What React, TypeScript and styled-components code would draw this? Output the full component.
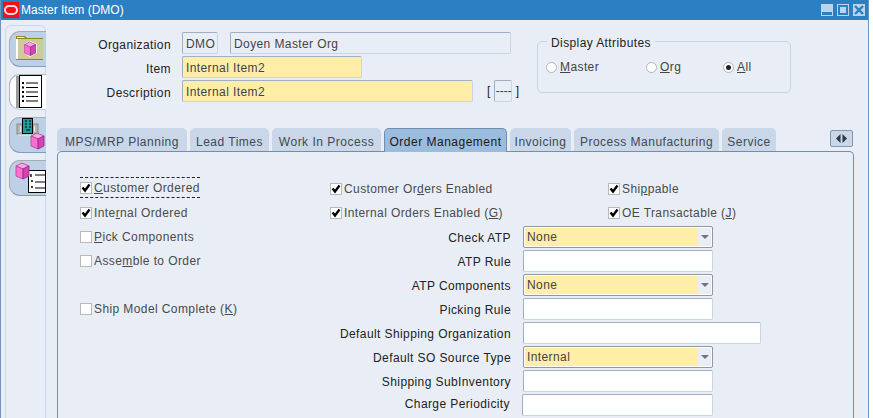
import * as React from 'react';
import styled, { createGlobalStyle } from 'styled-components';

const GlobalStyle = createGlobalStyle`
  html, body {
    margin: 0;
    padding: 0;
    height: 100%;
    background: #ffffff;
    overflow: hidden;
  }
  body {
    font-family: "Liberation Sans", Arial, sans-serif;
    font-size: 12px;
    letter-spacing: 0.4px;
  }
  u {
    text-underline-offset: 1px;
  }
`;

const Window = styled.div`
  display: flex;
  flex-direction: column;
  width: 869px;
  height: 418px;
  box-sizing: border-box;
  border-left: 1px solid #6f93bd;
  border-right: 1px solid #6f93bd;
  background: #e9eef6;
  overflow: hidden;
`;

const TitleBar = styled.div`
  display: flex;
  align-items: center;
  flex: none;
  height: 20px;
  margin-left: -1px;
  margin-right: -1px;
  padding-left: 3px;
  padding-right: 4px;
  background: #2b80c3;
  color: #ffffff;
  letter-spacing: 0;
`;

const Logo = styled.div`
  display: flex;
  align-items: center;
  justify-content: center;
  width: 16px;
  height: 16px;
  margin-right: 2px;
  background: #f40f14;
`;

const LogoRing = styled.div`
  width: 10px;
  height: 6px;
  border: 2px solid #ffd9d9;
  border-radius: 5px;
`;

const TitleText = styled.div`
  flex: 1;
`;

const WindowButtons = styled.div`
  display: flex;
  gap: 4px;
`;

const WindowButton = styled.svg`
  display: block;
  width: 12px;
  height: 12px;
  background: #b9d4eb;
`;

const Body = styled.div`
  display: flex;
  flex: 1;
  min-height: 0;
`;

const SideStrip = styled.div`
  display: flex;
  flex-direction: column;
  flex: none;
  gap: 7px;
  width: 41px;
  margin-top: 5px;
  margin-left: 4px;
  padding-top: 5px;
  padding-left: 3px;
  box-sizing: border-box;
  border: 1px solid #c9d8ea;
  border-bottom: none;
  border-top-left-radius: 6px;
  border-top-right-radius: 6px;
`;

const SideTab = styled.div<{ $active?: boolean }>`
  flex: none;
  width: 37px;
  height: 36px;
  margin-right: -1px;
  box-sizing: border-box;
  border: 1px solid ${(p) => (p.$active ? '#aeb4bc' : '#a4acb6')};
  border-right: none;
  border-bottom-color: ${(p) => (p.$active ? '#c2cedd' : '#7f9dc0')};
  border-radius: 11px 0 0 11px;
  background: ${(p) => (p.$active ? '#ffffff' : '#bed0e6')};
  overflow: hidden;
`;

const TabIcon = styled.svg`
  display: block;
  width: 36px;
  height: 34px;
`;

const Main = styled.div`
  display: flex;
  flex-direction: column;
  flex: 1;
  min-width: 0;
`;

const Header = styled.div`
  display: flex;
  flex: none;
  height: 83px;
  padding-top: 12px;
  box-sizing: border-box;
`;

const HeaderForm = styled.div`
  display: grid;
  flex: none;
  grid-template-columns: 125px 1fr;
  grid-auto-rows: 24px;
  column-gap: 11px;
  width: 491px;
`;

const Prompt = styled.div`
  align-self: center;
  padding-top: 2px;
  color: #222222;
  text-align: right;
  white-space: nowrap;
`;

const FieldRow = styled.div`
  display: flex;
  align-items: flex-start;
  gap: 12px;
`;

const Field = styled.div<{ $w?: number; $tone?: 'white' | 'yellow' | 'plain' }>`
  flex: none;
  width: ${(p) => (p.$w ? `${p.$w}px` : 'auto')};
  height: 22px;
  padding-left: 3px;
  box-sizing: border-box;
  border: 1px solid #c5d6e9;
  border-top-color: #9fb0c4;
  border-left-color: #9fb0c4;
  border-radius: 2px;
  background: ${(p) =>
    p.$tone === 'yellow' ? '#ffeea8' : p.$tone === 'plain' ? '#e9eef6' : '#ffffff'};
  color: #444444;
  line-height: 23px;
  white-space: nowrap;
`;

const DashField = styled(Field)`
  padding-left: 1px;
  letter-spacing: 0;
  line-height: 21px;
`;

const Bracket = styled.span`
  flex: none;
  margin: 0 -9px 0 2px;
  color: #222222;
  line-height: 22px;
`;

const BracketEnd = styled(Bracket)`
  margin: 0 0 0 -8px;
`;

const AttrGroup = styled.div`
  position: relative;
  flex: none;
  display: flex;
  align-items: flex-start;
  width: 254px;
  height: 52px;
  margin-top: 9px;
  padding: 18px 0 0 8px;
  box-sizing: border-box;
  border: 1px solid #c5d6e9;
  border-radius: 5px;
`;

const GroupLegend = styled.div`
  position: absolute;
  top: -6px;
  left: 9px;
  padding: 0 4px;
  background: #e9eef6;
  color: #222222;
  line-height: 14px;
`;

const RadioItem = styled.label<{ $w: number }>`
  display: flex;
  align-items: center;
  flex: none;
  gap: 3px;
  width: ${(p) => p.$w}px;
  height: 14px;
  color: #444444;
`;

const RadioDot = styled.span<{ $on?: boolean }>`
  display: flex;
  align-items: center;
  justify-content: center;
  flex: none;
  width: 11px;
  height: 11px;
  box-sizing: border-box;
  border: 1px solid #b4b4b4;
  border-radius: 50%;
  background: #ffffff;

  &::after {
    content: '';
    display: ${(p) => (p.$on ? 'block' : 'none')};
    width: 5px;
    height: 5px;
    border-radius: 50%;
    background: #222222;
  }
`;

const TabRow = styled.div`
  display: flex;
  align-items: flex-start;
  flex: none;
  gap: 3px;
  height: 23px;
  margin-top: 25px;
  margin-left: 11px;
  width: 796px;
`;

const Tab = styled.div<{ $w: number; $active?: boolean }>`
  position: relative;
  z-index: 1;
  flex: none;
  width: ${(p) => p.$w}px;
  height: ${(p) => (p.$active ? 24 : 23)}px;
  box-sizing: border-box;
  border-radius: 5px 5px 0 0;
  border: 1px solid ${(p) => (p.$active ? '#6f8fb0' : '#c9d7e8')};
  border-bottom: none;
  background: ${(p) => (p.$active ? '#9bbcdc' : '#c9d7e8')};
  color: ${(p) => (p.$active ? '#1a1a1a' : '#3d4a56')};
  letter-spacing: 0.5px;
  text-align: center;
  line-height: 26px;
  white-space: nowrap;
`;

const ScrollButton = styled.div`
  display: flex;
  align-items: center;
  justify-content: center;
  flex: none;
  width: 23px;
  height: 17px;
  margin-left: auto;
  margin-top: 2px;
  box-sizing: border-box;
  border: 1px solid #7f97b3;
  border-radius: 2px;
  background: #c9d7e8;
`;

const ScrollGlyph = styled.svg`
  display: block;
  width: 11px;
  height: 9px;
`;

const Panel = styled.div`
  flex: 1;
  width: 797px;
  margin-left: 11px;
  padding: 25px 0 0 22px;
  box-sizing: border-box;
  border: 1px solid #6f8fb0;
  border-bottom: none;
  border-radius: 5px 5px 0 0;
`;

const PanelGrid = styled.div`
  display: grid;
  grid-template-columns: 250px 181px 12px 85px 105px 48px;
  grid-auto-rows: 24px;
`;

const CheckItem = styled.label<{ $col: string; $row: number; $focus?: boolean }>`
  display: flex;
  align-items: center;
  align-self: center;
  justify-self: start;
  gap: 2px;
  grid-column: ${(p) => p.$col};
  grid-row: ${(p) => p.$row};
  height: ${(p) => (p.$focus ? '21px' : 'auto')};
  margin-top: ${(p) => (p.$focus ? '-3px' : '0')};
  border-top: ${(p) => (p.$focus ? '1px dashed #222222' : 'none')};
  border-bottom: ${(p) => (p.$focus ? '1px dashed #222222' : 'none')};
  box-sizing: border-box;
  color: #4a4a4a;
  white-space: nowrap;
`;

const CheckBox = styled.span`
  display: block;
  flex: none;
  width: 12px;
  height: 12px;
  box-sizing: border-box;
  border: 1px solid #b9b9b9;
  background: #ffffff;
`;

const CheckMark = styled.svg`
  display: block;
  width: 10px;
  height: 10px;
`;

const GridPrompt = styled(Prompt)<{ $row: number; $last?: boolean }>`
  grid-column: 2;
  grid-row: ${(p) => p.$row};
  margin-right: ${(p) => (p.$last ? 1 : 0)}px;
  padding-top: ${(p) => (p.$last ? 0 : 2)}px;
  margin-bottom: ${(p) => (p.$last ? 2 : 0)}px;
`;

const GridField = styled(Field)<{ $row: number; $wide?: boolean; $nudge?: boolean }>`
  grid-column: 4 / span ${(p) => (p.$wide ? 3 : 2)};
  grid-row: ${(p) => p.$row};
  align-self: center;
  margin-left: ${(p) => (p.$nudge ? -1 : 0)}px;
`;

const Combo = styled.div<{ $row: number }>`
  display: flex;
  grid-column: 4 / span 2;
  grid-row: ${(p) => p.$row};
  align-self: center;
  height: 22px;
  box-sizing: border-box;
  border: 1px solid #8f98a3;
  border-radius: 2px;
  background: #e9eef6;
  box-shadow: inset 0 0 0 1px #ffffff;
`;

const ComboValue = styled.div`
  flex: 1;
  margin: 1px 0 1px 1px;
  padding-left: 2px;
  background: #ffeea8;
  color: #444444;
  line-height: 19px;
`;

const ComboArrow = styled.div`
  display: flex;
  align-items: center;
  justify-content: center;
  flex: none;
  width: 14px;

  &::after {
    content: '';
    border-top: 4px solid #6c7486;
    border-left: 4px solid transparent;
    border-right: 4px solid transparent;
  }
`;

const Cube = ({ x, y, s = 1 }: { x: number; y: number; s?: number }) => (
  <g transform={`translate(${x} ${y}) scale(${s})`}>
    <path d="M0 3 L6 0 L13 3 L7 6 Z" fill="#ffa6dd" stroke="#b13fa0" strokeWidth="0.8" />
    <path d="M0 3 L7 6 L7 16 L0 13 Z" fill="#ff6fce" stroke="#b13fa0" strokeWidth="0.8" />
    <path d="M13 3 L7 6 L7 16 L13 13 Z" fill="#d445b4" stroke="#8a2a86" strokeWidth="0.8" />
  </g>
);

const FolderIcon = () => (
  <TabIcon viewBox="0 0 36 34">
    <path d="M6 6 V4 H15 L17 6 H33 V7 H6 Z" fill="#8b8b1c" />
    <path d="M7 5 H14 L15 6 H7 Z" fill="#f3f0c4" />
    <rect x="6" y="7" width="27" height="20" fill="#cfcb97" />
    <rect x="6" y="7" width="2" height="20" fill="#ffffff" />
    <rect x="6" y="27" width="27" height="1" fill="#8b8b1c" />
    <path d="M14 12 L20 9 L27 12 V21 L20 25 L14 21 Z" fill="#ffffff" />
    <Cube x={14.5} y={10} s={0.85} />
  </TabIcon>
);

const ListIcon = () => (
  <TabIcon viewBox="0 0 36 34">
    <rect x="6" y="1" width="3" height="32" fill="#9b9b9b" />
    <rect x="9.5" y="0.5" width="22" height="32" fill="#ffffff" stroke="#000000" />
    {[8, 12.5, 17, 21.5, 26].map((y) => (
      <React.Fragment key={y}>
        <rect x="12" y={y - 1} width="2" height="2" fill="#000000" />
        <rect x="16" y={y - 0.5} width="12" height="1" fill="#000000" />
      </React.Fragment>
    ))}
  </TabIcon>
);

const BuildingIcon = () => (
  <TabIcon viewBox="0 0 36 34">
    <rect x="7" y="6" width="21" height="10" fill="#b4b4b4" stroke="#8a8a8a" />
    <path d="M8 17 H29" stroke="#e8e8e8" strokeWidth="1" />
    <rect x="10" y="8" width="1" height="6" fill="#e8e8e8" />
    <rect x="24" y="8" width="1" height="6" fill="#e8e8e8" />
    <rect x="12.5" y="0.5" width="10" height="15" fill="#1f9e9e" stroke="#000000" />
    {[3, 6, 9].map((y) => (
      <path key={y} d={`M15 ${y} H17 M19 ${y} H21`} stroke="#000000" strokeWidth="1" />
    ))}
    <path d="M16 12 H20" stroke="#000000" strokeWidth="1" />
    <Cube x={21} y={15} />
  </TabIcon>
);

const OrderIcon = () => (
  <TabIcon viewBox="0 0 36 34">
    <rect x="18.5" y="9.5" width="17" height="22" fill="#ffffff" stroke="#000000" />
    <path d="M21 13 V16 M21 20 H23 M21 26 H23" stroke="#000000" strokeWidth="1.4" />
    {[14, 21, 27].map((y) => (
      <path key={y} d={`M25 ${y} H35`} stroke="#000000" strokeWidth="1" />
    ))}
    <Cube x={6} y={2} />
  </TabIcon>
);

const Check = ({ on, children }: { on?: boolean; children?: React.ReactNode }) => (
  <>
    <CheckBox>
      {on && (
        <CheckMark viewBox="0 0 10 10">
          <path d="M1.5 4.5 L4 7.5 L8.5 1.5" fill="none" stroke="#000000" strokeWidth="2.4" />
        </CheckMark>
      )}
    </CheckBox>
    <span>{children}</span>
  </>
);

const tabs = [
  { label: 'MPS/MRP Planning', w: 130 },
  { label: 'Lead Times', w: 79 },
  { label: 'Work In Process', w: 109 },
  { label: 'Order Management', w: 123, active: true },
  { label: 'Invoicing', w: 61 },
  { label: 'Process Manufacturing', w: 145 },
  { label: 'Service', w: 54 },
];

export default function App() {
  return (
    <>
      <GlobalStyle />
      <Window>
        <TitleBar>
          <Logo>
            <LogoRing />
          </Logo>
          <TitleText>Master Item (DMO)</TitleText>
          <WindowButtons>
            <WindowButton viewBox="0 0 12 12">
              <rect x="1" y="8" width="10" height="3" fill="#2b7fc3" />
            </WindowButton>
            <WindowButton viewBox="0 0 12 12">
              <rect x="2" y="2" width="8" height="8" fill="none" stroke="#2b7fc3" strokeWidth="2" />
            </WindowButton>
            <WindowButton viewBox="0 0 12 12">
              <path d="M2 2 L10 10 M10 2 L2 10" stroke="#2b7fc3" strokeWidth="2.4" />
            </WindowButton>
          </WindowButtons>
        </TitleBar>
        <Body>
          <SideStrip>
            <SideTab>
              <FolderIcon />
            </SideTab>
            <SideTab $active>
              <ListIcon />
            </SideTab>
            <SideTab>
              <BuildingIcon />
            </SideTab>
            <SideTab>
              <OrderIcon />
            </SideTab>
          </SideStrip>
          <Main>
            <Header>
              <HeaderForm>
                <Prompt>Organization</Prompt>
                <FieldRow>
                  <Field $w={36} $tone="plain">DMO</Field>
                  <Field $w={281} $tone="plain">Doyen Master Org</Field>
                </FieldRow>
                <Prompt>Item</Prompt>
                <FieldRow>
                  <Field $w={180} $tone="yellow">Internal Item2</Field>
                </FieldRow>
                <Prompt>Description</Prompt>
                <FieldRow>
                  <Field $w={291} $tone="yellow">Internal Item2</Field>
                  <Bracket>[</Bracket>
                  <DashField $w={18} $tone="plain">----</DashField>
                  <BracketEnd>]</BracketEnd>
                </FieldRow>
              </HeaderForm>
              <AttrGroup>
                <GroupLegend>Display Attributes</GroupLegend>
                <RadioItem $w={100}>
                  <RadioDot />
                  <span><u>M</u>aster</span>
                </RadioItem>
                <RadioItem $w={77}>
                  <RadioDot />
                  <span><u>O</u>rg</span>
                </RadioItem>
                <RadioItem $w={50}>
                  <RadioDot $on />
                  <span><u>A</u>ll</span>
                </RadioItem>
              </AttrGroup>
            </Header>
            <TabRow>
              {tabs.map((t) => (
                <Tab key={t.label} $w={t.w} $active={t.active}>{t.label}</Tab>
              ))}
              <ScrollButton>
                <ScrollGlyph viewBox="0 0 11 9">
                  <path d="M4.5 0 V9 L0 4.5 Z M6.5 0 V9 L11 4.5 Z" fill="#2d3a4a" />
                </ScrollGlyph>
              </ScrollButton>
            </TabRow>
            <Panel>
              <PanelGrid>
                <CheckItem $col="1" $row={1} $focus>
                  <Check on><u>C</u>ustomer Ordered</Check>
                </CheckItem>
                <CheckItem $col="2 / span 3" $row={1}>
                  <Check on>Customer Or<u>d</u>ers Enabled</Check>
                </CheckItem>
                <CheckItem $col="5 / span 2" $row={1}>
                  <Check on>Shi<u>p</u>pable</Check>
                </CheckItem>
                <CheckItem $col="1" $row={2}>
                  <Check on>Inte<u>r</u>nal Ordered</Check>
                </CheckItem>
                <CheckItem $col="2 / span 3" $row={2}>
                  <Check on>Internal Orders Enabled (<u>G</u>)</Check>
                </CheckItem>
                <CheckItem $col="5 / span 2" $row={2}>
                  <Check on>OE Transactable (<u>J</u>)</Check>
                </CheckItem>
                <CheckItem $col="1" $row={3}>
                  <Check><u>P</u>ick Components</Check>
                </CheckItem>
                <CheckItem $col="1" $row={4}>
                  <Check>Asse<u>m</u>ble to Order</Check>
                </CheckItem>
                <CheckItem $col="1" $row={6}>
                  <Check>Ship Model Complete (<u>K</u>)</Check>
                </CheckItem>

                <GridPrompt $row={3}>Check ATP</GridPrompt>
                <Combo $row={3}>
                  <ComboValue>None</ComboValue>
                  <ComboArrow />
                </Combo>
                <GridPrompt $row={4}>ATP Rule</GridPrompt>
                <GridField $row={4} />
                <GridPrompt $row={5}>ATP Components</GridPrompt>
                <Combo $row={5}>
                  <ComboValue>None</ComboValue>
                  <ComboArrow />
                </Combo>
                <GridPrompt $row={6}>Picking Rule</GridPrompt>
                <GridField $row={6} />
                <GridPrompt $row={7}>Default Shipping Organization</GridPrompt>
                <GridField $row={7} $wide />
                <GridPrompt $row={8}>Default SO Source Type</GridPrompt>
                <Combo $row={8}>
                  <ComboValue>Internal</ComboValue>
                  <ComboArrow />
                </Combo>
                <GridPrompt $row={9}>Shipping SubInventory</GridPrompt>
                <GridField $row={9} />
                <GridPrompt $row={10} $last>Charge Periodicity</GridPrompt>
                <GridField $row={10} $nudge />
              </PanelGrid>
            </Panel>
          </Main>
        </Body>
      </Window>
    </>
  );
}
